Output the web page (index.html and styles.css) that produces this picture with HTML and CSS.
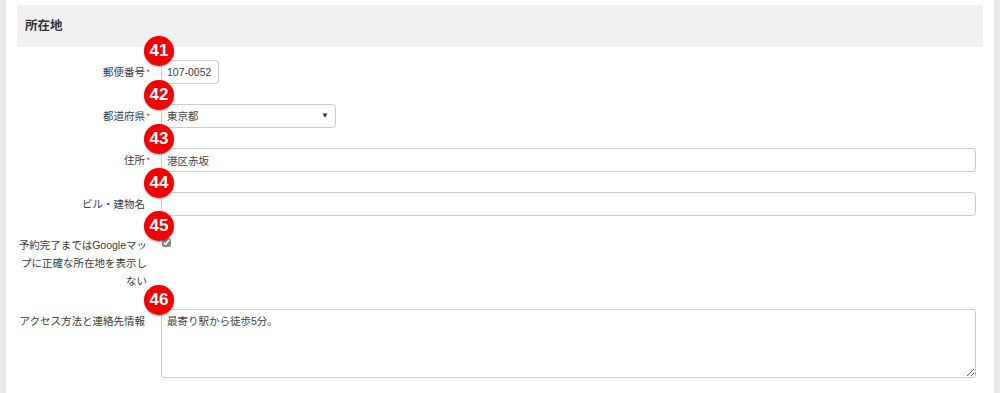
FILE: index.html
```html
<!DOCTYPE html>
<html lang="ja">
<head>
    <meta charset="UTF-8">
    <meta name="viewport" content="width=device-width, initial-scale=1.0">
    <title>所在地</title>
    <link rel="stylesheet" href="styles.css">
</head>
<body>

    <div class="panel">
        <h2 class="section-title">所在地</h2>

        <form class="address-form">
            <div class="form-row">
                <label class="form-label required" for="zip">郵便番号</label>
                <div class="form-field">
                    <span class="badge">41</span>
                    <input type="text" id="zip" class="input input-zip" value="107-0052">
                </div>
            </div>

            <div class="form-row">
                <label class="form-label required" for="pref">都道府県</label>
                <div class="form-field">
                    <span class="badge">42</span>
                    <div class="select-wrap">
                        <select id="pref" class="input input-select">
                            <option>東京都</option>
                        </select>
                    </div>
                </div>
            </div>

            <div class="form-row">
                <label class="form-label required" for="address">住所</label>
                <div class="form-field">
                    <span class="badge">43</span>
                    <input type="text" id="address" class="input" value="港区赤坂">
                </div>
            </div>

            <div class="form-row">
                <label class="form-label" for="building">ビル・建物名</label>
                <div class="form-field">
                    <span class="badge">44</span>
                    <input type="text" id="building" class="input" value="">
                </div>
            </div>

            <div class="form-row row-check">
                <label class="form-label" for="hideMap">予約完了まではGoogleマップに正確な所在地を表示しない</label>
                <div class="form-field">
                    <span class="badge">45</span>
                    <input type="checkbox" id="hideMap" class="check" checked>
                </div>
            </div>

            <div class="form-row">
                <label class="form-label" for="access">アクセス方法と連絡先情報</label>
                <div class="form-field">
                    <span class="badge">46</span>
                    <textarea id="access" class="input textarea">最寄り駅から徒歩5分。</textarea>
                </div>
            </div>
        </form>
    </div>

</body>
</html>
```

FILE: styles.css
```css
body {
    margin: 0;
    background-color: #e8e8e8;
    font-family: "Liberation Sans", Arial, "Noto Sans CJK JP", sans-serif;
    font-size: 10.5px;
    color: #333;
}

.panel {
    margin: 0 6px;
    padding: 5px 11px 0 11px;
    min-height: 388px;
    background-color: #fff;
}

.section-title {
    margin: 0;
    height: 42px;
    padding: 0 8px;
    background-color: #f1f1f1;
    font-size: 12.5px;
    font-weight: bold;
    line-height: 42px;
    color: #333;
}

.address-form {
    margin-top: 13px;
    padding-right: 7px;
}

.form-row {
    display: flex;
    align-items: flex-start;
    margin-bottom: 20px;
}

.form-label {
    position: relative;
    flex: 0 0 128px;
    padding: 5px 16px 0 0;
    line-height: 14px;
    text-align: right;
    color: #3a3a3a;
}

.required::after {
    content: "*";
    position: absolute;
    right: 11px;
    top: 5px;
    color: #e8383d;
    font-size: 9px;
}

.form-field {
    position: relative;
    flex: 1;
}

.badge {
    position: absolute;
    left: -17px;
    top: -24px;
    z-index: 2;
    width: 30px;
    height: 30px;
    border-radius: 50%;
    background-color: #f50000;
    box-shadow: 0 1px 2px rgba(0, 0, 0, 0.35);
    color: #fff;
    font-family: "Liberation Sans", Arial, sans-serif;
    font-size: 17px;
    font-weight: bold;
    line-height: 30px;
    text-align: center;
}

.input {
    display: block;
    box-sizing: border-box;
    width: 100%;
    height: 24px;
    margin: 0;
    padding: 0 5px;
    border: 1px solid #ccc;
    border-radius: 3px;
    background-color: #fff;
    font-family: inherit;
    font-size: 10.5px;
    color: #444;
}

.input-zip {
    width: 58px;
}

.select-wrap {
    position: relative;
    width: 175px;
}

.select-wrap::after {
    content: "▼";
    position: absolute;
    right: 7px;
    top: 7px;
    font-size: 8px;
    color: #333;
    pointer-events: none;
}

.input-select {
    appearance: none;
    -webkit-appearance: none;
}

.row-check {
    margin-bottom: 19px;
}

.row-check .form-label {
    flex-basis: 130px;
    padding: 0 14px 0 0;
    line-height: 18px;
}

.row-check .badge {
    top: -25px;
}

.check {
    display: block;
    width: 9px;
    height: 9px;
    margin: 2px 0 0 1px;
    accent-color: #8a8a8a;
}

.textarea {
    height: 69px;
    padding: 5px;
    line-height: 13px;
    resize: vertical;
}
```
